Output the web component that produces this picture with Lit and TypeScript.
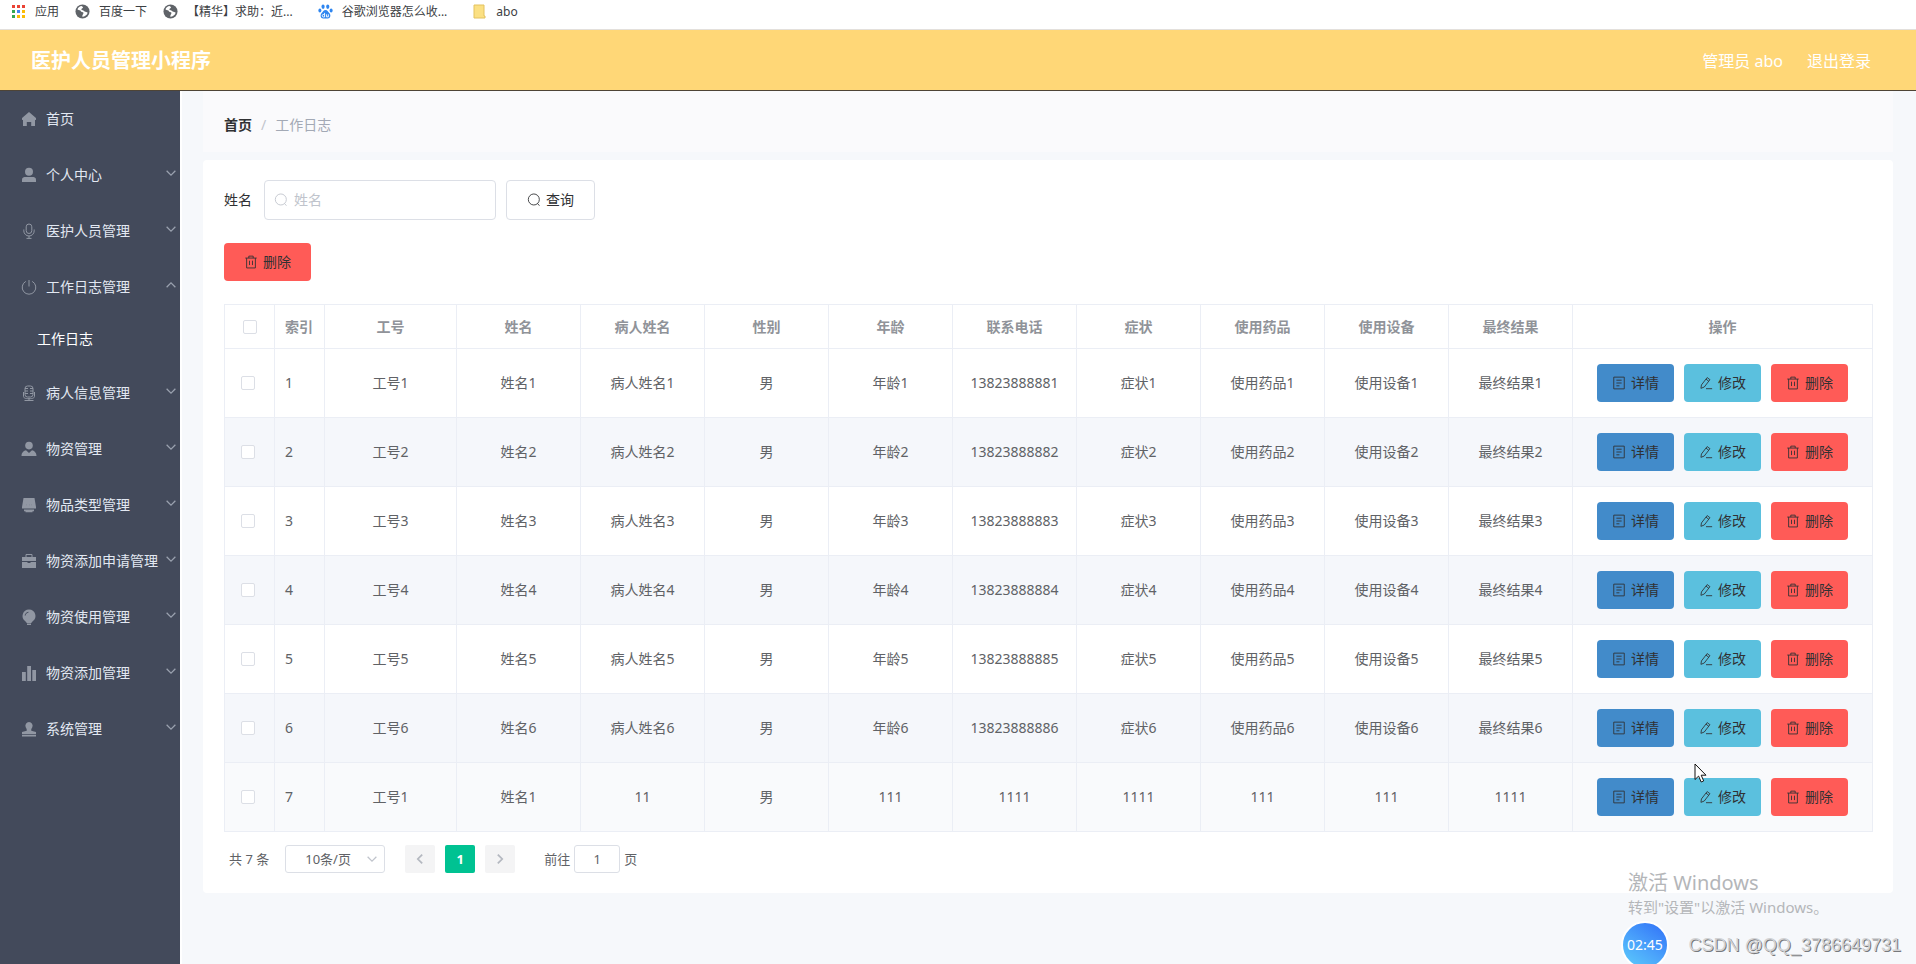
import { LitElement, html, svg, css } from "lit";
import { customElement, property, state } from "lit/decorators.js";
import { classMap } from "lit/directives/class-map.js";

const glyphs: Record<string, unknown> = {
  home: svg`<path fill="currentColor" d="M8 1 1 7v1.500q0 .6.800.6H2V15h3.800v-4h4.400v4H14V9.100h.2q.8 0 .8-.6V7L8 1z"/>`,
  user: svg`<circle cx="8" cy="4.800" r="4" fill="currentColor"/><path fill="currentColor" d="M1 15v-2.500C1 10.600 2.800 10 5 10h6c2.200 0 4 .6 4 2.500V15z"/>`,
  mic: svg`<rect x="5.200" y="1" width="5.600" height="9.500" rx="2.800"/><path d="M2.800 6.500v1.300a5.200 5.200 0 0 0 10.400 0V6.500M8 13v2.300M5.500 15.400h5"/>`,
  power: svg`<path d="M8 1v6.500M4.800 2.400a6.800 6.800 0 1 0 6.400 0"/>`,
  studio: svg`<rect x="4" y="1" width="8" height="11" rx="2.500"/><path d="M4 3.500h3M9 3.500h3M4 6h3M9 6h3M4 8.500h3M9 8.500h3M2.500 7v4c0 2 1.500 2.700 5.500 2.700s5.500-.7 5.500-2.700V7M8 13.500v2M3.500 15.500h9"/>`,
  person: svg`<circle cx="8" cy="4.600" r="3.800" fill="currentColor"/><path fill="currentColor" d="M.5 15c0-3.800 2.500-5.300 4.500-5.800L8 12l3-2.800c2 .5 4.500 2 4.500 5.800z"/>`,
  goods: svg`<path fill="currentColor" d="M2.500 1h11l1.500 9v1.500H1V10zM3 12.500h10v1.800h-1.500v1h-7v-1H3z"/><path d="M5.200 7.800h.1M8 7.800h.1M10.800 7.800h.1" stroke="#434a5b" stroke-width="1.400"/>`,
  cooperation: svg`<path d="M5 4V1.500h6V4"/><path fill="currentColor" d="M1 4h14v4H1zM1 9h5.500v1h3V9H15v6H1z"/>`,
  opportunity: svg`<path fill="currentColor" d="M8 .5a6.500 6.500 0 0 0-3.700 11.800L5.800 14h4.400l1.500-1.700A6.500 6.500 0 0 0 8 .5zM6 14.600h4V16H6z"/><path d="M4.200 6.500C4.400 4.600 5.600 3.500 7.400 3.300" stroke="#434a5b"/>`,
  bars: svg`<path fill="currentColor" d="M1 7h3.800v9H1zM6.200 1H10v15H6.200zM11.300 5H15v11h-3.700z"/>`,
  custom: svg`<path fill="currentColor" d="M8 1a3.700 3.700 0 0 1 3.300 5.200C10.500 7.600 10 8.500 10.300 9.800L15 11v2.300H1V11l4.700-1.200C6 8.500 5.500 7.600 4.700 6.200A3.700 3.700 0 0 1 8 1zM1 14h14v1.400H1z"/>`,
  search: svg`<circle cx="7.800" cy="7.400" r="6.300"/><path d="m12 12 2.200 2.500"/>`,
  trash: svg`<path d="M1.500 3.500h13M3 3.500v11.300h10V3.500M5.500 3.500V1.300h5v2.200M6.300 6.500v5M9.700 6.500v5"/>`,
  doc: svg`<path d="M2 1.300h12v13.400H2zM5 4.800h6M5 8h6M5 11.200h3.500"/>`,
  edit: svg`<path d="m2.800 10.200 6.500-8.400 3.200 2.400-6.500 8.400-3.800 1.500zM8 3.600l3.100 2.400M8 14.500h7"/>`,
  down: svg`<path d="m1 4.500 7 7 7-7"/>`,
  up: svg`<path d="m1 11.500 7-7 7 7"/>`,
  left: svg`<path d="M10.500 3 5.500 8l5 5"/>`,
  right: svg`<path d="m5.500 3 5 5-5 5"/>`,
};

@customElement("ui-icon")
class UiIcon extends LitElement {
  @property() name = "home";

  static styles = css`
    :host { display: inline-flex; flex: none; width: 14px; height: 14px; }
    svg { width: 100%; height: 100%; fill: none; stroke: currentColor; stroke-width: var(--stroke, 1); }
    [fill="currentColor"] { stroke: none; }
  `;

  render() {
    return html`<svg viewBox="0 0 16 16" aria-hidden="true">${glyphs[this.name]}</svg>`;
  }
}

interface MenuItem {
  icon: string;
  label: string;
  children?: string[];
}

const menu: MenuItem[] = [
  { icon: "home", label: "首页" },
  { icon: "user", label: "个人中心", children: [] },
  { icon: "mic", label: "医护人员管理", children: [] },
  { icon: "power", label: "工作日志管理", children: ["工作日志"] },
  { icon: "studio", label: "病人信息管理", children: [] },
  { icon: "person", label: "物资管理", children: [] },
  { icon: "goods", label: "物品类型管理", children: [] },
  { icon: "cooperation", label: "物资添加申请管理", children: [] },
  { icon: "opportunity", label: "物资使用管理", children: [] },
  { icon: "bars", label: "物资添加管理", children: [] },
  { icon: "custom", label: "系统管理", children: [] },
];

const columns = ["工号", "姓名", "病人姓名", "性别", "年龄", "联系电话", "症状", "使用药品", "使用设备", "最终结果"];

const rows: string[][] = [
  ...[1, 2, 3, 4, 5, 6].map((n) => [
    `工号${n}`, `姓名${n}`, `病人姓名${n}`, "男", `年龄${n}`, `1382388888${n}`,
    `症状${n}`, `使用药品${n}`, `使用设备${n}`, `最终结果${n}`,
  ]),
  ["工号1", "姓名1", "11", "男", "111", "1111", "1111", "111", "111", "1111"],
];

@customElement("app-root")
class AppRoot extends LitElement {
  @state() private opened = "工作日志管理";

  static styles = css`
    :host {
      display: flex;
      flex-direction: column;
      position: relative;
      min-height: 100vh;
      overflow: hidden;
      background: #f6f8fb;
      color: #606266;
      font: 14px/20px "Noto Sans", "Noto Sans CJK SC", sans-serif;
    }
    *, *::before, *::after { box-sizing: border-box; }
    button, input, select { font: inherit; color: inherit; margin: 0; }
    button { cursor: pointer; }
    a { color: inherit; text-decoration: none; }

    .bookmarks {
      display: flex;
      align-items: center;
      height: 30px;
      padding: 0 11px 6px;
      background: #fff;
      border-bottom: 1px solid #e3e0dc;
      color: #3c4043;
      font-size: 12px;
    }
    .bookmark { display: flex; align-items: center; gap: 9px; margin-right: 16px; white-space: nowrap; }
    .bookmark.wide { margin-right: 25px; }
    .bookmark svg { width: 15px; height: 15px; flex: none; }

    .header {
      display: flex;
      align-items: center;
      justify-content: space-between;
      height: 61px;
      padding: 2px 45px 0 31px;
      background: #ffd777;
      border-bottom: 1px solid #4e4436;
      color: #fff;
    }
    .title { margin: 0; font-size: 20px; line-height: 28px; font-weight: 700; }
    .account { display: flex; gap: 24px; font-size: 16px; line-height: 24px; }

    .body { display: flex; flex: 1; }
    .sidebar { width: 180px; flex: none; background: #434a5b; color: #e2e8f2; }
    .item {
      display: flex;
      align-items: center;
      width: 100%;
      height: 56px;
      padding: 0 4px 0 21px;
      border: 0;
      background: none;
      text-align: left;
      white-space: nowrap;
    }
    .item .glyph { width: 16px; height: 16px; margin-right: 9px; color: #9197a3; }
    .item .arrow { width: 10px; height: 10px; margin: 0 0 4px auto; color: #9aa1af; --stroke: 2; }
    .sub { display: flex; align-items: center; height: 50px; padding: 0 0 2px 37px; color: #fff; }

    .main { flex: 1; min-width: 0; padding: 0 23px 0 21px; border-left: 2px solid #fff; }
    .crumbs { display: flex; gap: 9px; padding: 24px 21px 17px; background: #fafafc; color: #c0c4cc; }
    .crumbs a { color: #303133; font-weight: 700; }
    .crumbs .here { color: #a3a9b5; }

    .card { margin-top: 8px; padding: 20px 20px 20px 21px; background: #fff; border-radius: 4px; }
    .search { display: flex; align-items: center; color: #303133; }
    .field {
      display: flex;
      align-items: center;
      width: 232px;
      height: 40px;
      margin: 0 10px 0 12px;
      padding: 0 10px 0 9px;
      gap: 6px;
      border: 1px solid #dcdfe6;
      border-radius: 4px;
      color: #c0c4cc;
    }
    .field input { flex: 1; min-width: 0; border: 0; padding: 0; outline: 0; background: none; color: #606266; }
    .field input::placeholder { color: #c0c4cc; opacity: 1; }

    .btn {
      display: inline-flex;
      align-items: center;
      justify-content: center;
      gap: 5px;
      height: 38px;
      padding: 0 15px;
      border: 0;
      border-radius: 4px;
      color: #303133;
      white-space: nowrap;
    }
    .btn.query { height: 40px; padding: 0 20px; border: 1px solid #dcdfe6; background: #fff; }
    .btn.large { padding: 0 20px; margin: 23px 0; }
    .btn.detail { background: #428bca; }
    .btn.modify { background: #5bc0de; }
    .btn.remove { background: #ff5b57; }

    .grid { width: 100%; table-layout: fixed; border-collapse: collapse; background: #fff; }
    .grid th, .grid td { border: 1px solid #ebeef5; padding: 0; text-align: center; overflow: hidden; }
    .grid th { height: 44px; color: #909399; font-weight: 700; }
    .grid td { height: 69px; }
    .grid tr.striped td { background: #f5f7fb; }
    .grid tr.hovered td { background: #f9fafc; }
    .grid .index { padding-left: 10px; text-align: left; }
    .col-check, .col-index { width: 50px; }
    .col-no { width: 132px; }
    .col-actions { width: 300px; }
    .actions { display: flex; justify-content: center; gap: 10px; }
    .tick {
      appearance: none;
      display: block;
      width: 14px;
      height: 14px;
      margin: 0 auto 0 16px;
      border: 1px solid #dcdfe6;
      border-radius: 2px;
      background: #fff;
    }
    th .tick { margin: 0 auto; }

    .pager { display: flex; align-items: center; padding: 12px 0 0 5px; font-size: 13px; height: 41px; }
    .size { position: relative; display: flex; width: 100px; margin: 0 20px 0 16px; }
    .size select {
      appearance: none;
      width: 100%;
      height: 28px;
      padding: 0 25px 0 19px;
      border: 1px solid #dcdfe6;
      border-radius: 3px;
      background: #fff;
    }
    .size ui-icon { position: absolute; right: 8px; top: 9px; width: 10px; height: 10px; color: #c0c4cc; --stroke: 2; }
    .page {
      display: flex;
      align-items: center;
      justify-content: center;
      width: 30px;
      height: 28px;
      margin-right: 10px;
      padding: 0;
      border: 0;
      border-radius: 2px;
      background: #f4f4f5;
      color: #b4b8c0;
      --stroke: 2;
    }
    .page.current { background: #00c292; color: #fff; font-weight: 700; }
    .jump { display: flex; align-items: center; gap: 4px; margin-left: 19px; }
    .jump input {
      width: 46px;
      height: 28px;
      padding: 0;
      border: 1px solid #dcdfe6;
      border-radius: 3px;
      text-align: center;
      background: #fff;
    }

    .activate { position: absolute; right: 90px; bottom: 46px; width: 198px; color: #b4b6b9; white-space: nowrap; pointer-events: none; }
    .activate .big { font-size: 20px; line-height: 26px; }
    .activate .small { font-size: 15px; line-height: 22px; }
    .clock {
      position: absolute;
      right: 247px;
      bottom: -5px;
      display: flex;
      align-items: center;
      justify-content: center;
      width: 48px;
      height: 48px;
      border: 2px solid #fff;
      border-radius: 50%;
      background: linear-gradient(35deg, #5ac8fb 5%, #4ba4fb 45%, #3579f8 90%);
      color: #fff;
      font-size: 14px;
    }
    .credit {
      position: absolute;
      right: 15px;
      bottom: 6px;
      color: #d2d3d5;
      font: 18px/26px "Liberation Sans", sans-serif;
      text-shadow: 1px 1px 0 #77797c;
      white-space: nowrap;
      pointer-events: none;
    }
    .cursor { position: absolute; right: 208px; bottom: 181px; width: 14px; height: 20px; pointer-events: none; }
  `;

  private globe() {
    return html`<svg viewBox="0 0 16 16" aria-hidden="true">
      <circle cx="8" cy="8" r="7.500" fill="#5f6368" />
      <path fill="#fff" d="M7 2.200c-1.800.3-3.600 1.400-4.400 3.300.8.900 1.700 1 2.600 1.200 1 .2 1 1.800 2.300 1.900 1.300.1 1.900.8 1.300 1.900-.5 1-1 1.600-1 3.100 2.700-.1 4.900-1.600 5.700-4.200-.8-1.300-2.200-.7-3.200-1.500C9.400 7.200 8.600 6.500 7.400 6.300c-.9-.2-.7-1.300.1-1.500 1-.3 1.400-1.300.6-1.800z" />
    </svg>`;
  }

  private bookmarks() {
    const dots = ["#ea4335", "#ea4335", "#ea4335", "#34a853", "#4285f4", "#fbbc05", "#34a853", "#fbbc05", "#fbbc05"];
    return html`<nav class="bookmarks" aria-label="书签">
      <a class="bookmark" href="#">
        <svg viewBox="0 0 15 15" aria-hidden="true">
          ${dots.map((c, i) => svg`<rect x=${1 + (i % 3) * 5} y=${1 + Math.floor(i / 3) * 5} width="3" height="3" fill=${c} />`)}
        </svg>应用
      </a>
      <a class="bookmark" href="#">${this.globe()}百度一下</a>
      <a class="bookmark wide" href="#">${this.globe()}【精华】求助：近...</a>
      <a class="bookmark wide" href="#">
        <svg viewBox="0 0 16 16" aria-hidden="true" fill="#2f86f0">
          <ellipse cx="5.400" cy="2.900" rx="1.700" ry="2.300" /><ellipse cx="10.400" cy="2.900" rx="1.700" ry="2.300" />
          <ellipse cx="2" cy="7" rx="1.600" ry="2.100" /><ellipse cx="14" cy="7" rx="1.600" ry="2.100" />
          <path d="M8 6.500c2 0 2.700 1.900 4 3.200 2.200 2.200 1.200 5.800-1.500 5.800H5.500C2.800 15.500 1.800 11.900 4 9.700 5.300 8.400 6 6.500 8 6.500z" />
          <path d="M7 9.500v4.300H5.800a1.300 1.300 0 0 1 0-2.600H7M9 11v2.700h2V11" fill="none" stroke="#fff" />
        </svg>谷歌浏览器怎么收...
      </a>
      <a class="bookmark" href="#">
        <svg viewBox="0 0 15 15" aria-hidden="true">
          <path d="M2 1h10v11h1v2H2z" fill="#fbe083" stroke="#e3c25e" />
        </svg>abo
      </a>
    </nav>`;
  }

  private menuItem(item: MenuItem) {
    const open = this.opened === item.label;
    return html`
      <button class="item" @click=${() => (this.opened = open ? "" : item.label)}>
        <ui-icon class="glyph" name=${item.icon}></ui-icon>${item.label}
        ${item.children ? html`<ui-icon class="arrow" name=${open ? "up" : "down"}></ui-icon>` : ""}
      </button>
      ${open ? item.children?.map((c) => html`<a class="sub" href="#">${c}</a>`) : ""}
    `;
  }

  private row(cells: string[], i: number) {
    return html`<tr class=${classMap({ striped: i % 2 === 1, hovered: i === rows.length - 1 })}>
      <td><input class="tick" type="checkbox" aria-label=${`选择第${i + 1}行`} /></td>
      <td class="index">${i + 1}</td>
      ${cells.map((c) => html`<td>${c}</td>`)}
      <td>
        <div class="actions">
          <button class="btn detail"><ui-icon name="doc"></ui-icon>详情</button>
          <button class="btn modify"><ui-icon name="edit"></ui-icon>修改</button>
          <button class="btn remove"><ui-icon name="trash"></ui-icon>删除</button>
        </div>
      </td>
    </tr>`;
  }

  render() {
    return html`
      ${this.bookmarks()}
      <header class="header">
        <h1 class="title">医护人员管理小程序</h1>
        <div class="account"><span>管理员 abo</span><a href="#">退出登录</a></div>
      </header>
      <div class="body">
        <nav class="sidebar" aria-label="菜单">${menu.map((m) => this.menuItem(m))}</nav>
        <main class="main">
          <nav class="crumbs" aria-label="位置">
            <a href="#">首页</a><span>/</span><span class="here">工作日志</span>
          </nav>
          <section class="card">
            <form class="search" @submit=${(e: Event) => e.preventDefault()}>
              <label for="name">姓名</label>
              <div class="field">
                <ui-icon name="search"></ui-icon>
                <input id="name" type="text" placeholder="姓名" />
              </div>
              <button class="btn query"><ui-icon name="search"></ui-icon>查询</button>
            </form>
            <button class="btn remove large"><ui-icon name="trash"></ui-icon>删除</button>
            <table class="grid">
              <colgroup>
                <col class="col-check" /><col class="col-index" /><col class="col-no" />
                <col span="9" /><col class="col-actions" />
              </colgroup>
              <thead>
                <tr>
                  <th><input class="tick" type="checkbox" aria-label="全选" /></th>
                  <th class="index">索引</th>
                  ${columns.map((c) => html`<th>${c}</th>`)}
                  <th>操作</th>
                </tr>
              </thead>
              <tbody>${rows.map((r, i) => this.row(r, i))}</tbody>
            </table>
            <div class="pager">
              <span>共 7 条</span>
              <div class="size">
                <select aria-label="每页条数"><option>10条/页</option></select>
                <ui-icon name="down"></ui-icon>
              </div>
              <button class="page" aria-label="上一页"><ui-icon name="left"></ui-icon></button>
              <button class="page current">1</button>
              <button class="page" aria-label="下一页"><ui-icon name="right"></ui-icon></button>
              <div class="jump">
                <label for="page">前往</label><input id="page" type="text" value="1" /><label for="page">页</label>
              </div>
            </div>
          </section>
        </main>
      </div>
      <div class="activate">
        <div class="big">激活 Windows</div>
        <div class="small">转到"设置"以激活 Windows。</div>
      </div>
      <div class="clock">02:45</div>
      <div class="credit">CSDN @QQ_3786649731</div>
      <svg class="cursor" viewBox="0 0 14 20" aria-hidden="true">
        <path d="M1 1v15.500l3.600-3.400 2.600 5.900 2.500-1.100-2.500-5.700H12z" fill="#fff" stroke="#111" />
      </svg>
    `;
  }
}
